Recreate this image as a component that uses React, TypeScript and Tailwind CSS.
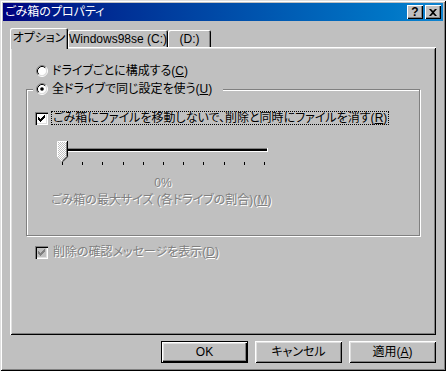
import React from 'react';

const face = 'bg-[#c0c0c0]';

function Radio({ checked }: { checked?: boolean }) {
  return (
    <svg width="12" height="12" viewBox="0 0 12 12" className="shrink-0">
      <circle cx="6" cy="6" r="4.5" fill="#fff" />
      <path d="M2.11 9.89 A5.5 5.5 0 0 1 9.89 2.11" stroke="#808080" fill="none" />
      <path d="M9.89 2.11 A5.5 5.5 0 0 1 2.11 9.89" stroke="#fff" fill="none" />
      <path d="M2.82 9.18 A4.5 4.5 0 0 1 9.18 2.82" stroke="#000" fill="none" />
      <path d="M9.18 2.82 A4.5 4.5 0 0 1 2.82 9.18" stroke="#dfdfdf" fill="none" />
      {checked && <circle cx="6" cy="6" r="1.8" fill="#000" />}
    </svg>
  );
}

function Check({ disabled }: { disabled?: boolean }) {
  const cols = [5, 6, 7, 6, 5, 4, 3];
  return (
    <div
      className={`w-[13px] h-[13px] shrink-0 shadow-[inset_1px_1px_#808080,inset_2px_2px_#000,inset_-1px_-1px_#fff,inset_-2px_-2px_#dfdfdf] ${
        disabled ? 'bg-[#c0c0c0]' : 'bg-white'
      }`}
    >
      <svg width="13" height="13" viewBox="0 0 13 13">
        {cols.map((y, i) => (
          <rect key={i} x={3 + i} y={y} width="1" height="3" fill={disabled ? '#808080' : '#000'} />
        ))}
      </svg>
    </div>
  );
}

function Slider() {
  // ticks from x=7 to 209, 11 of them
  const ticks = Array.from({ length: 11 }, (_, i) => Math.round(7 + i * 20.2));
  return (
    <svg width="216" height="27" viewBox="0 0 216 27" className="block">
      <defs>
        <pattern id="dither" width="2" height="2" patternUnits="userSpaceOnUse">
          <rect width="2" height="2" fill="#fff" />
          <rect width="1" height="1" fill="#c0c0c0" />
          <rect x="1" y="1" width="1" height="1" fill="#c0c0c0" />
        </pattern>
      </defs>
      {/* channel */}
      <rect x="5" y="7" width="208" height="1" fill="#808080" />
      <rect x="6" y="8" width="206" height="2" fill="#000" />
      <rect x="5" y="10" width="208" height="1" fill="#fff" />
      <rect x="212" y="7" width="1" height="4" fill="#fff" />
      {/* thumb */}
      <g transform="translate(2,0)">
        <polygon points="0,0 11,0 11,16 5.5,21 0,16" fill="url(#dither)" />
        <polyline points="0.5,16 0.5,0.5 10,0.5" stroke="#fff" fill="none" />
        <polyline points="0.5,15.5 5,20" stroke="#fff" fill="none" />
        <polyline points="10.5,0 10.5,15.8 5.5,20.8" stroke="#000" fill="none" />
        <polyline points="9.5,1 9.5,15.3 5.5,19.3" stroke="#808080" fill="none" />
      </g>
      {ticks.map((x) => (
        <rect key={x} x={x} y="21" width="1" height="3" fill="#000" />
      ))}
    </svg>
  );
}

function Btn({ children, isDefault }: { children: React.ReactNode; isDefault?: boolean }) {
  return (
    <button
      className={`w-[87px] h-[22px] ${face} flex items-center justify-center text-black ${
        isDefault
          ? 'shadow-[inset_1px_1px_#000,inset_-1px_-1px_#000,inset_2px_2px_#fff,inset_-2px_-2px_#000,inset_-3px_-3px_#808080,inset_3px_3px_#dfdfdf]'
          : 'shadow-[inset_1px_1px_#fff,inset_-1px_-1px_#000,inset_2px_2px_#dfdfdf,inset_-2px_-2px_#808080]'
      }`}
    >
      {children}
    </button>
  );
}

export default function App() {
  const dim = 'text-[#808080] [text-shadow:1px_1px_0_#fff]';
  return (
    <div
      className={`w-[446px] h-[371px] ${face} p-[3px] flex flex-col font-['Liberation_Sans','Noto_Sans_CJK_JP',sans-serif] text-[12px] leading-[14px] text-black [font-feature-settings:'palt'] shadow-[inset_1px_1px_#dfdfdf,inset_-1px_-1px_#000,inset_2px_2px_#fff,inset_-2px_-2px_#808080]`}
    >
      {/* Title bar */}
      <div className="h-[18px] flex items-center justify-between pl-[2px] pr-[2px] bg-gradient-to-r from-[#000080] to-[#1084d0]">
        <span className="text-white text-[12px]">ごみ箱のプロパティ</span>
        <div className="flex gap-[2px]">
          <div className="w-[16px] h-[14px] bg-[#c0c0c0] flex items-center justify-center font-bold text-[12px] leading-none shadow-[inset_1px_1px_#fff,inset_-1px_-1px_#000,inset_-2px_-2px_#808080]">
            ?
          </div>
          <div className="w-[16px] h-[14px] bg-[#c0c0c0] flex items-center justify-center shadow-[inset_1px_1px_#fff,inset_-1px_-1px_#000,inset_-2px_-2px_#808080]">
            <svg width="8" height="7" viewBox="0 0 8 7">
              <path d="M0 0h2l2 2 2-2h2L5 3.5 8 7H6L4 5 2 7H0l3-3.5z" fill="#000" />
            </svg>
          </div>
        </div>
      </div>

      <div className="flex-1 flex flex-col px-[7px] pt-[7px]">
        {/* Tabs */}
        <div className="h-[19px] flex items-end">
          <div className="relative z-10 -mb-[2px] h-[21px] w-[58px] bg-[#c0c0c0] rounded-t-[2px] flex items-center justify-center pb-[2px] shadow-[inset_1px_1px_#fff,inset_-1px_0_#000,inset_-2px_0_#808080]">
            オプション
          </div>
          <div className="h-[17px] w-[100px] rounded-t-[2px] flex items-center justify-center pt-[1px] shadow-[inset_1px_1px_#fff,inset_-1px_0_#000,inset_-2px_0_#808080]">
            Windows98se (C:)
          </div>
          <div className="h-[17px] w-[43px] rounded-t-[2px] flex items-center justify-center pt-[1px] shadow-[inset_1px_1px_#fff,inset_-1px_0_#000,inset_-2px_0_#808080]">
            (D:)
          </div>
        </div>

        {/* Panel */}
        <div className="h-[288px] pt-[17px] pl-[16px] flex flex-col shadow-[inset_1px_1px_#fff,inset_-1px_-1px_#000,inset_2px_2px_#dfdfdf,inset_-2px_-2px_#808080]">
          <div className="h-[14px] pl-[10px] flex items-center gap-[4px]">
            <Radio />
            <span>
              ドライブごとに構成する(<span className="underline">C</span>)
            </span>
          </div>

          <div className="relative mt-[11px] w-[394px] h-[147px] border border-[#808080] shadow-[1px_1px_0_#fff,inset_1px_1px_0_#fff]">
            <div className="absolute top-[-8px] left-[6px] w-[190px] h-[14px] bg-[#c0c0c0] pl-[3px] flex items-center gap-[4px]">
              <Radio checked />
              <span>
                全ドライブで同じ設定を使う(<span className="underline">U</span>)
              </span>
            </div>

            <div className="pt-[21px] flex flex-col">
              <div className="h-[14px] pl-[8px] flex items-center gap-[4px]">
                <Check />
                <span className="outline outline-1 outline-dotted outline-black px-[1px] leading-[12px]">
                  ごみ箱にファイルを移動しないで、削除と同時にファイルを消す(<span className="underline">R</span>)
                </span>
              </div>

              <div className="mt-[16px] ml-[28px]">
                <Slider />
              </div>
              <div className={`mt-[8px] ml-[28px] w-[216px] text-center ${dim}`}>0%</div>
              <div className={`mt-[3px] ml-[24px] ${dim}`}>
                ごみ箱の最大サイズ (各ドライブの割合)(<span className="underline">M</span>)
              </div>
            </div>
          </div>

          <div className="mt-[9px] ml-[9px] h-[14px] flex items-center gap-[5px]">
            <Check disabled />
            <span className={dim}>
              削除の確認メッセージを表示(<span className="underline">D</span>)
            </span>
          </div>
        </div>

        {/* Buttons */}
        <div className="mt-[6px] flex justify-end gap-[7px]">
          <Btn isDefault>OK</Btn>
          <Btn>キャンセル</Btn>
          <Btn>
            適用(<span className="underline">A</span>)
          </Btn>
        </div>
      </div>
    </div>
  );
}
